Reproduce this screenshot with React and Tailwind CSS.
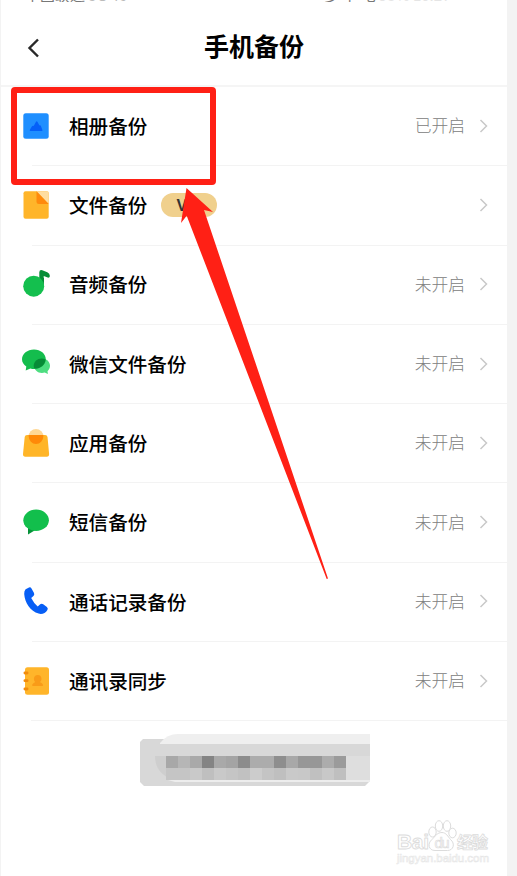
const rows = [
  { label: '相册备份', status: '已开启', icon: AlbumIcon },
  { label: '文件备份', status: '', icon: FileIcon, vip: true },
  { label: '音频备份', status: '未开启', icon: AudioIcon },
  { label: '微信文件备份', status: '未开启', icon: WechatIcon },
  { label: '应用备份', status: '未开启', icon: AppIcon },
  { label: '短信备份', status: '未开启', icon: SmsIcon },
  { label: '通话记录备份', status: '未开启', icon: CallIcon },
  { label: '通讯录同步', status: '未开启', icon: ContactsIcon }
];

const mosaicTop = ['#a8a8a8', '#b6b6b6', '#a9a9a9', '#848484', '#a9a9a9', '#a4a4a4', '#8c8c8c', '#acacac', '#acacac', '#8e8e8e', '#a8a8a8', '#979797', '#979797', '#acacac', '#9b9b9b'];
const mosaicBottom = ['#c5c5c5', '#c5c5c5', '#c9c9c9', '#bfbfbf', '#c9c9c9', '#c5c5c5', '#c1c1c1', '#cccccc', '#c4c4c4', '#bfbfbf', '#c9c9c9', '#c8c8c8', '#c0c0c0', '#c8c8c8', '#bfbfbf'];

function AlbumIcon() {
  return (
    <svg width="30" height="30" viewBox="0 0 30 30">
      <rect x="2.3" y="2.3" width="25.4" height="25.4" rx="2.5" fill="#1f8fff" />
      <path d="M9.5 20c-.8 0-1-.5-.6-1.200L11 15.300c.4-.7 1-.8 1.700-.3L15 10.800c.4-.7 1-.7 1.400 0l2 3.700c.7-.4 1.200-.2 1.500.5l1.500 4c.2.700-.1 1-.8 1z" fill="#0560f8" />
    </svg>
  );
}

function FileIcon() {
  return (
    <svg width="30" height="30" viewBox="0 0 30 30">
      <rect x="2.5" y="1.3" width="25.2" height="27.4" rx="2" fill="#ffb52a" />
      <path d="M15.5 1.3h10.2a2 2 0 0 1 2 2v10.7z" fill="#ffdda0" />
      <path d="M15.5 1.3 27.7 14H18q-2.5 0-2.5-2.5z" fill="#ff8a0c" />
    </svg>
  );
}

function AudioIcon() {
  return (
    <svg width="30" height="30" viewBox="0 0 30 30">
      <path d="M18.3 15V3.3q.2-3 3-2.100l5 2q2.500 1.300 2.600 3.800-.2 2-2.200 1.600L22.700 7v11z" fill="#068d38" />
      <circle cx="12.7" cy="17.2" r="10.5" fill="#14bf4e" />
      <path d="M18.3 8.300q4 2.600 4.700 7.500V9z" fill="#068d38" />
    </svg>
  );
}

function WechatIcon() {
  return (
    <svg width="30" height="30" viewBox="0 0 30 30">
      <path d="M21 9.500c4.500 0 8 3.200 8 7.300 0 2.200-1 4-2.500 5.400l.4 2.800-3.200-1.400c-.9.200-1.800.3-2.700.3-4.500 0-8-3.200-8-7.200s3.500-7.200 8-7.200z" fill="#4ddd80" />
      <path d="M13 .5c6.600 0 11.800 4.300 11.800 9.700S19.600 20 13 20c-1.300 0-2.500-.1-3.600-.5L4.700 21.500l.6-4C2.700 15.700 1 13.200 1 10.200 1 4.800 6.400.5 13 .5z" fill="#14bd4d" />
      <path d="M24.500 10.400c-.3 5-4.700 9-11.100 9.200-.5-.8-.7-1.800-.7-2.900 0-4 3.600-7.200 8-7.200 1.400 0 2.700.3 3.800.9z" fill="#078b37" />
    </svg>
  );
}

function AppIcon() {
  return (
    <svg width="30" height="30" viewBox="0 0 30 30">
      <circle cx="15" cy="8.500" r="7.500" fill="#ffd896" />
      <path d="M6 7h18.200q2 0 2.300 2l1.600 17q.1 2.700-2.200 2.700H4.300Q1.900 28.700 2 26L3.700 9Q4 7 6 7z" fill="#ffb528" />
      <path d="M7.700 7h14.600v1.500a7.300 7.500 0 0 1-14.600 0z" fill="#ff8908" />
    </svg>
  );
}

function SmsIcon() {
  return (
    <svg width="30" height="30" viewBox="0 0 30 30">
      <path d="M7 19v8.500L16 22z" fill="#079239" />
      <ellipse cx="15.1" cy="13.2" rx="12.8" ry="10.7" fill="#12bf4c" />
    </svg>
  );
}

function CallIcon() {
  return (
    <svg width="30" height="30" viewBox="0 0 30 30">
      <path d="M4.600 3.200 8 1.500Q9.600.9 10.500 2.600L13 7q.8 1.800-.6 3l-2.200 2q2.500 5.100 6.500 8.400l2.500-2.100q1.400-1 3-.1l3.700 2.700q1.500 1.300.5 3c-1.800 3-5.400 4.900-8.800 3.700C9.500 25 3.800 17 3.200 8q-.1-3.300 1.400-4.800z" fill="#075ef5" />
    </svg>
  );
}

function ContactsIcon() {
  return (
    <svg width="30" height="30" viewBox="0 0 30 30">
      <rect x="4" y="1.3" width="24" height="27.4" rx="2.5" fill="#ffb52a" />
      {[7, 14.7, 23].map((y) => (
        <rect key={y} x="2.5" y={y - 1.4} width="5" height="2.8" rx="1.4" fill="#f18b0d" />
      ))}
      <path d="M16.800 9c2.300 0 3.700 1.700 3.700 3.800 0 1.500-.6 2.700-1.600 3.300 1.700.9 3 2 3.200 3.200q0 .8-1 .8h-9q-1 0-1-.8c.2-1.200 1.600-2.300 3.200-3.200-.8-.6-1.400-1.800-1.400-3.300C12.900 10.700 14.500 9 16.800 9z" fill="#f99b18" />
    </svg>
  );
}

const Row = ({ label, status, icon: Icon, vip, last }) => (
  <li className="relative flex h-[79.3px] items-center pr-[18px] pb-0.5 pl-5">
    <Icon />
    <span className="ml-[18px] text-[19.6px] leading-none font-medium text-black">{label}</span>
    {vip && (
      <span className="ml-3.5 flex h-6 w-14 items-center rounded-full bg-[#f0d08d] pt-0.5 pl-[15px] font-['Liberation_Sans'] text-base leading-none font-bold tracking-[-1px] text-[#333]">
        VIP
      </span>
    )}
    <span className="ml-auto text-[16.8px] leading-none font-light text-[#808080]">{status}</span>
    <svg className="ml-3.5" width="10" height="14" viewBox="0 0 10 14" fill="none" stroke="#c9c9c9" strokeWidth="1.5">
      <path d="m1.500 1 6 6-6 6" />
    </svg>
    <span className={`absolute right-0 bottom-0 h-px bg-[#f3f3f3] ${last ? 'left-[30px]' : 'left-[31px]'}`} />
  </li>
);

const Mosaic = () => (
  <svg width="230" height="53" viewBox="0 0 230 53">
    <path d="M3 5h227v42l-5 5H4l-4-4V8z" fill="#d8d8d8" />
    <path d="M20 9Q27 0 38 0h192v10H20z" fill="#efefef" />
    <path d="M15 22h201v24H34Q15 40 15 22z" fill="#cecece" />
    <path d="M206 22h24v26h-24z" fill="#dedede" />
    <path d="M28 46h202v2H35z" fill="#ededed" />
    {mosaicTop.map((fill, i) => (
      <rect key={i} x={26 + i * 12} y="22" width="12" height="12" fill={fill} />
    ))}
    {mosaicBottom.map((fill, i) => (
      <rect key={i} x={26 + i * 12} y="34" width="12" height="12" fill={fill} />
    ))}
  </svg>
);

const Watermark = () => (
  <svg className="absolute top-[815px] left-[392px]" width="104" height="52" viewBox="0 0 104 52" fill="#fff" stroke="#dcdcdc" fontFamily="'Liberation Sans', 'Noto Sans CJK SC', sans-serif" strokeLinejoin="round">
    <text x="5" y="33.5" fontSize="21" fontWeight="bold" strokeWidth="0.9" textLength="32">Bai</text>
    <g strokeWidth="1">
      <ellipse cx="40.5" cy="17" rx="3.7" ry="5" />
      <ellipse cx="47" cy="11" rx="3.7" ry="5.3" />
      <ellipse cx="55" cy="11" rx="3.7" ry="5.3" />
      <ellipse cx="60.5" cy="18" rx="3.7" ry="4.8" />
      <path d="M50 17.500c4 0 6 4 8.500 7 5 4 3 11-3 11H43c-6.500 0-8-7-3-11 3-3 5-7 10-7z" />
    </g>
    <text x="42.5" y="32.5" fontSize="15" strokeWidth="0.7" textLength="15">du</text>
    <text x="65" y="33" fontSize="16" fontWeight="bold" strokeWidth="0.8" textLength="31">经验</text>
    <text x="5" y="46.5" fontSize="11.5" strokeWidth="0.6" stroke="#e6e6e6" textLength="92">jingyan.baidu.com</text>
  </svg>
);

const App = () => (
  <div className="relative flex h-[876px] w-[517px] overflow-hidden bg-[#f3f3f3] pr-2.5 pl-px font-['Noto_Sans_CJK_SC',sans-serif]">
    <main className="flex w-full flex-col bg-white">
      {/* status bar, scrolled almost out of view */}
      <div className="flex h-0.5 items-end justify-between overflow-hidden pr-[18px] pl-6 text-[15px] leading-none text-[#777]">
        <span>中国联通 <span className="text-[#bbb]">5G 46</span></span>
        <span className="w-[165px] whitespace-pre">多 中 电 <span className="text-[#e5e5e5]">95% 10:27</span></span>
      </div>
      <header className="relative flex h-[83px] items-center justify-center pt-[3px]">
        <svg className="absolute top-9 left-[26px]" width="14" height="20" viewBox="0 0 14 20" fill="none" stroke="#282828" strokeWidth="2.4">
          <path d="m11 1.500-8.500 8.500 8.500 8.500" />
        </svg>
        <h1 className="text-[25px] leading-none font-bold text-black">手机备份</h1>
      </header>
      <div className="h-0.5 bg-[#f5f5f5]" />
      <ul>
        {rows.map((row, i) => (
          <Row key={row.label} {...row} last={i === rows.length - 1} />
        ))}
      </ul>
      <div className="mt-[13px] ml-[139px]">
        <Mosaic />
      </div>
    </main>
    <Watermark />
    <div className="absolute top-[87px] left-[11px] h-[98px] w-[205px] rounded-[4px] border-6 border-[#ff2015]" />
    <svg className="absolute top-[180px] left-[170px]" width="170" height="405" viewBox="170 180 170 405">
      <path d="M186.500 188 213 212 204 210 328 578.500 326.700 579 186.700 215.700 181 223z" fill="#ff2015" />
    </svg>
  </div>
);

export default App;
